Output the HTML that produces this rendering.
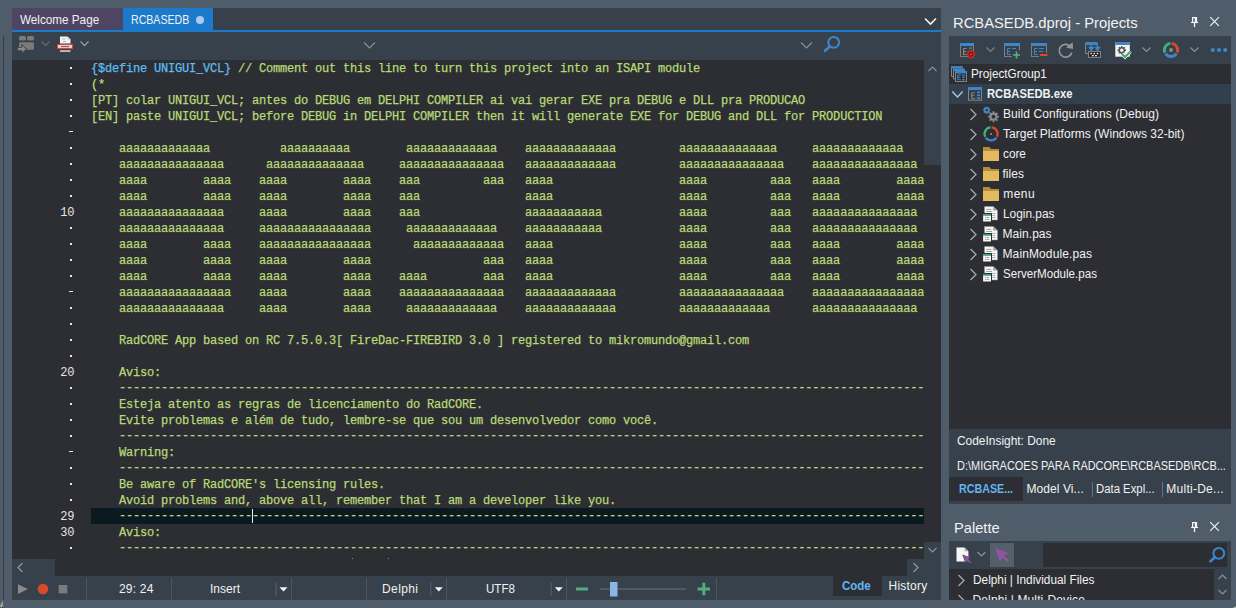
<!DOCTYPE html>
<html><head><meta charset="utf-8"><title>RCBASEDB</title>
<style>
*{box-sizing:border-box}
html,body{margin:0;padding:0}
body{width:1236px;height:608px;background:#4f5d6b;overflow:hidden;position:relative;font-family:"Liberation Sans",sans-serif;}
.a{position:absolute}
.l{position:absolute;white-space:pre;line-height:normal}
#ed{position:absolute;left:12px;top:60px;width:912px;height:499px;background:#2d2e33;overflow:hidden}
#code{position:absolute;left:79px;top:0;width:833px;height:499px;overflow:hidden;font-family:"Liberation Mono",monospace;font-size:12px;letter-spacing:-0.2px;color:#b9d977;white-space:pre;-webkit-text-stroke:0.25px currentColor}
.ln{height:16px;line-height:18px}
.hl{background:#0b1920}
.d{color:#5cbdf4}
.dh{position:relative;top:-1px}
.gn{position:absolute;left:39.3px;width:35px;text-align:right;height:16px;line-height:18px;font-family:"Liberation Mono",monospace;font-size:12px;letter-spacing:-0.2px;color:#e4e4e4}
.gd{position:absolute;background:#e8e8e8}
</style></head><body>
<!-- left dark line -->
<div class="a" style="left:3px;top:36px;width:1px;height:564px;background:#343d47"></div>
<!-- tab bar -->
<div class="a" style="left:12px;top:8px;width:929px;height:22px;background:#37414b"></div>
<div class="a" style="left:12px;top:8px;width:111px;height:22px;background:#4e4463"></div>
<div class="a" style="left:123px;top:8px;width:90px;height:24px;background:#1b7acb"></div>
<div class="a" style="left:12px;top:30px;width:929px;height:2px;background:#1b7acb"></div>
<div class="a" style="left:196px;top:16px;width:8px;height:8px;border-radius:50%;background:#a9c9ef"></div>
<!-- editor toolbar -->
<div class="a" style="left:12px;top:32px;width:929px;height:28px;background:#37414b"></div>
<!-- editor -->
<div class="a" style="left:12px;top:60px;width:929px;height:516px;background:#2d2e33"></div>
<div id="ed"><div id="code"><div class="ln"><span class="d">{$define UNIGUI_VCL}</span> // Comment out this line to turn this project into an ISAPI module</div><div class="ln">(*</div><div class="ln">[PT] colar UNIGUI_VCL; antes do DEBUG em DELPHI COMPILER ai vai gerar EXE pra DEBUG e DLL pra PRODUCAO</div><div class="ln">[EN] paste UNIGUI_VCL; before DEBUG in DELPHI COMPILER then it will generate EXE for DEBUG and DLL for PRODUCTION</div><div class="ln"> </div><div class="ln">    aaaaaaaaaaaaa          aaaaaaaaaa        aaaaaaaaaaaaa    aaaaaaaaaaaaa         aaaaaaaaaaaaaa     aaaaaaaaaaaaa</div><div class="ln">    aaaaaaaaaaaaaaa      aaaaaaaaaaaaaa     aaaaaaaaaaaaaaa   aaaaaaaaaaaaa         aaaaaaaaaaaaaaa    aaaaaaaaaaaaaaa</div><div class="ln">    aaaa        aaaa    aaaa        aaaa    aaa         aaa   aaaa                  aaaa         aaa   aaaa        aaaa</div><div class="ln">    aaaa        aaaa    aaaa        aaaa    aaa               aaaa                  aaaa         aaa   aaaa        aaaa</div><div class="ln">    aaaaaaaaaaaaaaa     aaaa        aaaa    aaa               aaaaaaaaaaa           aaaa         aaa   aaaaaaaaaaaaaaa</div><div class="ln">    aaaaaaaaaaaaaaa     aaaaaaaaaaaaaaaa     aaaaaaaaaaaaa    aaaaaaaaaaa           aaaa         aaa   aaaaaaaaaaaaaaa</div><div class="ln">    aaaa        aaaa    aaaaaaaaaaaaaaaa      aaaaaaaaaaaaa   aaaa                  aaaa         aaa   aaaa        aaaa</div><div class="ln">    aaaa        aaaa    aaaa        aaaa                aaa   aaaa                  aaaa         aaa   aaaa        aaaa</div><div class="ln">    aaaa        aaaa    aaaa        aaaa    aaaa        aaa   aaaa                  aaaa         aaa   aaaa        aaaa</div><div class="ln">    aaaaaaaaaaaaaaaa    aaaa        aaaa    aaaaaaaaaaaaaaa   aaaaaaaaaaaaa         aaaaaaaaaaaaaaa    aaaaaaaaaaaaaaaa</div><div class="ln">    aaaaaaaaaaaaaaa     aaaa        aaaa     aaaaaaaaaaaaa    aaaaaaaaaaaaa         aaaaaaaaaaaaa      aaaaaaaaaaaaaaa</div><div class="ln"> </div><div class="ln">    RadCORE App based on RC 7.5.0.3[ FireDac-FIREBIRD 3.0 ] registered to mikromundo@gmail.com</div><div class="ln"> </div><div class="ln">    Aviso:</div><div class="ln">    <span class="dh">------------------------------------------------------------------------------------------------------------------------</span></div><div class="ln">    Esteja atento as regras de licenciamento do RadCORE.</div><div class="ln">    Evite problemas e além de tudo, lembre-se que sou um desenvolvedor como você.</div><div class="ln">    <span class="dh">------------------------------------------------------------------------------------------------------------------------</span></div><div class="ln">    Warning:</div><div class="ln">    <span class="dh">------------------------------------------------------------------------------------------------------------------------</span></div><div class="ln">    Be aware of RadCORE's licensing rules.</div><div class="ln">    Avoid problems and, above all, remember that I am a developer like you.</div><div class="ln hl">    <span class="dh">------------------------------------------------------------------------------------------------------------------------</span></div><div class="ln">    Aviso:</div><div class="ln">    <span class="dh">------------------------------------------------------------------------------------------------------------------------</span></div><div class="ln">    Esteja atento as regras de licenciamento do RadCORE.</div></div></div>
<div class="gd" style="top:67px;left:69.5px;width:2px;height:2px"></div><div class="gd" style="top:83px;left:69.5px;width:2px;height:2px"></div><div class="gd" style="top:99px;left:69.5px;width:2px;height:2px"></div><div class="gd" style="top:115px;left:69.5px;width:2px;height:2px"></div><div class="gd" style="top:131px;left:68.5px;width:4px;height:1px"></div><div class="gd" style="top:147px;left:69.5px;width:2px;height:2px"></div><div class="gd" style="top:163px;left:69.5px;width:2px;height:2px"></div><div class="gd" style="top:179px;left:69.5px;width:2px;height:2px"></div><div class="gd" style="top:195px;left:69.5px;width:2px;height:2px"></div><div class="gn" style="top:204px">10</div><div class="gd" style="top:227px;left:69.5px;width:2px;height:2px"></div><div class="gd" style="top:243px;left:69.5px;width:2px;height:2px"></div><div class="gd" style="top:259px;left:69.5px;width:2px;height:2px"></div><div class="gd" style="top:275px;left:69.5px;width:2px;height:2px"></div><div class="gd" style="top:291px;left:68.5px;width:4px;height:1px"></div><div class="gd" style="top:307px;left:69.5px;width:2px;height:2px"></div><div class="gd" style="top:323px;left:69.5px;width:2px;height:2px"></div><div class="gd" style="top:339px;left:69.5px;width:2px;height:2px"></div><div class="gd" style="top:355px;left:69.5px;width:2px;height:2px"></div><div class="gn" style="top:364px">20</div><div class="gd" style="top:387px;left:69.5px;width:2px;height:2px"></div><div class="gd" style="top:403px;left:69.5px;width:2px;height:2px"></div><div class="gd" style="top:419px;left:69.5px;width:2px;height:2px"></div><div class="gd" style="top:435px;left:69.5px;width:2px;height:2px"></div><div class="gd" style="top:451px;left:68.5px;width:4px;height:1px"></div><div class="gd" style="top:467px;left:69.5px;width:2px;height:2px"></div><div class="gd" style="top:483px;left:69.5px;width:2px;height:2px"></div><div class="gd" style="top:499px;left:69.5px;width:2px;height:2px"></div><div class="gn" style="top:508px">29</div><div class="gn" style="top:524px">30</div><div class="gd" style="top:547px;left:69.5px;width:2px;height:2px"></div>
<div class="a" style="left:252px;top:509px;width:1px;height:14px;background:#f0f0f0"></div>
<div class="a" style="left:352px;top:558px;width:1px;height:1px;background:#7f9460"></div><div class="a" style="left:388px;top:558px;width:1px;height:1px;background:#7f9460"></div>
<!-- scrollbars -->
<div class="a" style="left:924px;top:60px;width:17px;height:105px;background:#37414b"></div>
<div class="a" style="left:924px;top:542px;width:17px;height:34px;background:#37414b"></div>
<div class="a" style="left:907px;top:559px;width:17px;height:17px;background:#37414b"></div>
<div class="a" style="left:12px;top:559px;width:43px;height:17px;background:#37414b"></div>
<!-- status bar -->
<div class="a" style="left:12px;top:576px;width:929px;height:24px;background:#37414b"></div>
<div class="a" style="left:833px;top:576px;width:49px;height:20px;background:#2d2e33"></div>
<!-- right: projects -->
<div class="a" style="left:949px;top:36px;width:282px;height:468px;background:#37414b"></div>
<div class="a" style="left:949px;top:64px;width:282px;height:365px;background:#2d2e33"></div>
<div class="a" style="left:949px;top:84px;width:282px;height:20px;background:#323f4c"></div>
<div class="a" style="left:949px;top:477px;width:74px;height:24px;background:#2d2e33"></div>
<div class="a" style="left:1092px;top:482px;width:1px;height:15px;background:#6a737c"></div>
<div class="a" style="left:1162px;top:482px;width:1px;height:15px;background:#6a737c"></div>
<!-- palette -->
<div class="a" style="left:949px;top:541px;width:282px;height:59px;background:#37414b"></div>
<div class="a" style="left:1043px;top:543px;width:184px;height:24px;background:#2d2e33"></div>
<div class="a" style="left:990px;top:543px;width:24px;height:23.700px;background:#545f69"></div>
<div class="a" style="left:949px;top:569px;width:265px;height:31px;background:#2d2e33;overflow:hidden"></div>
<svg class="a" style="left:0;top:0" width="1236" height="608" viewBox="0 0 1236 608" fill="none">
<!-- ===== editor tab bar / toolbar ===== -->
<path d="M925 18.5 L930.5 24 L936 18.5" stroke="#f4f4f4" stroke-width="1.6"/>
<!-- icon1: layout -->
<g fill="#7b7b7b">
<rect x="19" y="36" width="7" height="4.5" rx="1.5"/>
<rect x="27" y="36" width="7" height="4.5" rx="1.5"/>
<rect x="19" y="42.200" width="15" height="7.600" rx="1.500"/>
<path d="M17.800 47.800 H22.300 V45.600 L26 49 L22.300 52.400 V50.200 H17.800 Z" fill="#8a8a8a" stroke="#37414b" stroke-width="1.600" paint-order="stroke"/>
</g>
<path d="M41.500 41.500 L45.500 45.500 L49.500 41.500" stroke="#5f6b76" stroke-width="1.300"/>
<!-- icon2: doc with red -->
<path d="M60 36.500 H67.500 L70.500 39.500 V43.500 H60 Z" fill="#f4f4f4"/>
<path d="M67.500 36.500 V39.500 H70.500 Z" fill="#c9c9c9"/>
<rect x="62" y="38.500" width="3.500" height="1" fill="#b5b5b5"/><rect x="63" y="41" width="3" height="1" fill="#b5b5b5"/>
<rect x="57.500" y="44.500" width="15" height="4.100" fill="#f3c9cc" stroke="#d8472a" stroke-width="1"/>
<rect x="61" y="46.100" width="8" height="1" fill="#6b5a60"/>
<rect x="60" y="50.400" width="10.500" height="1.300" fill="#f4f4f4"/>
<path d="M80.500 41.500 L84.500 45.500 L88.500 41.500" stroke="#939da6" stroke-width="1.300"/>
<path d="M364 42.500 L369.500 48 L375 42.500" stroke="#87919a" stroke-width="1.200"/>
<path d="M801 42.500 L806.500 48 L812 42.500" stroke="#87919a" stroke-width="1.200"/>
<circle cx="833.700" cy="42.300" r="5.400" stroke="#3f86c8" stroke-width="2"/>
<path d="M829.800 46.600 L825 50.800" stroke="#3f86c8" stroke-width="2.600" stroke-linecap="round"/>
<!-- scroll arrows -->
<path d="M928.500 71 L932.500 67 L936.500 71" stroke="#87919a" stroke-width="1.200"/>
<path d="M928.500 548 L932.500 552 L936.500 548" stroke="#87919a" stroke-width="1.200"/>
<path d="M913.500 563 L918 567.500 L913.500 572" stroke="#8f98a0" stroke-width="1.200"/>
<path d="M22.500 563 L18 567.500 L22.500 572" stroke="#8f98a0" stroke-width="1.200"/>
<!-- ===== status bar ===== -->
<path d="M18 584.200 L27.800 589 L18 593.900 Z" fill="#8a8a8a"/>
<circle cx="43" cy="589" r="5.300" fill="#d9492b"/>
<rect x="58.600" y="585" width="8.700" height="8.400" fill="#7b7b7b"/>
<g fill="#4b5661">
<rect x="86" y="578" width="1" height="22"/><rect x="171" y="578" width="1" height="22"/>
<rect x="291" y="578" width="1" height="22"/><rect x="366" y="578" width="1" height="22"/>
<rect x="446" y="578" width="1" height="22"/><rect x="566" y="578" width="1" height="22"/>
<rect x="716" y="578" width="1" height="22"/>
<rect x="275.500" y="582" width="1.500" height="14"/><rect x="430" y="582" width="1.500" height="14"/><rect x="550.500" y="582" width="1.500" height="14"/>
</g>
<g fill="#f4f4f4">
<path d="M279.500 587.200 H287.500 L283.500 591.500 Z"/>
<path d="M434.800 587.200 H442.800 L438.800 591.500 Z"/>
<path d="M554.800 587.200 H562.800 L558.800 591.500 Z"/>
</g>
<rect x="576" y="587.500" width="12" height="3" fill="#4fae7c"/>
<rect x="600" y="588.500" width="86" height="1" fill="#6b747d"/>
<rect x="610" y="582" width="7.500" height="14.500" fill="#8db4e2"/>
<rect x="697.500" y="587.500" width="12.500" height="3" fill="#4fae7c"/><rect x="702.300" y="582.700" width="3" height="12.500" fill="#4fae7c"/>
<!-- ===== right panel header ===== -->
<g id="pin1" fill="#f4f4f4">
<path fill-rule="evenodd" d="M1192 17 H1197.100 V22 H1192 Z M1193.200 18.200 V22 H1194.800 V18.200 Z"/>
<rect x="1191" y="21.900" width="7.100" height="1.150"/><rect x="1193.900" y="23" width="1.250" height="4.100"/>
</g>
<path d="M1210.200 17.200 L1218.900 25.900 M1218.900 17.200 L1210.200 25.900" stroke="#f4f4f4" stroke-width="1.150"/>
<use href="#pin1" y="505"/>
<path d="M1210.200 522.200 L1218.900 530.900 M1218.900 522.200 L1210.200 530.900" stroke="#f4f4f4" stroke-width="1.150"/>
<!-- ===== projects toolbar ===== -->
<!-- icon 1 -->
<rect x="960.500" y="43.500" width="13" height="13" stroke="#7d7d7d"/><rect x="960" y="43" width="14" height="3" fill="#3f86c8"/>
<path d="M966.500 48.500 H963.500 V54.500 H966.500 M963.500 51.500 H966" stroke="#8a8a8a"/>
<rect x="969" y="47.500" width="3" height="1.300" fill="#3f86c8"/>
<circle cx="971" cy="54.200" r="3.300" fill="#2a2022" stroke="#d3251c" stroke-width="1.700"/><circle cx="971" cy="54.200" r="1.600" fill="#e0241b"/>
<path d="M986.500 47.500 L990.500 51.500 L994.500 47.500" stroke="#77828b" stroke-width="1.200"/>
<!-- icon 2 -->
<rect x="1004.500" y="43.500" width="15" height="13" stroke="#7d7d7d"/><rect x="1004" y="43" width="16" height="3" fill="#3f86c8"/>
<path d="M1010.500 48.500 H1007.500 V54.500 H1010.500 M1007.500 51.500 H1010" stroke="#3f86c8"/>
<rect x="1012" y="48" width="4" height="1" fill="#3f86c8"/><rect x="1012" y="51" width="3" height="1" fill="#3f86c8"/>
<rect x="1012" y="50.500" width="9" height="9" fill="#37414b"/>
<path d="M1016.500 51.500 V58.500 M1013 55 H1020" stroke="#4fb783" stroke-width="1.600"/>
<!-- icon 3 -->
<rect x="1031.500" y="43.500" width="15" height="13" stroke="#7d7d7d"/><rect x="1031" y="43" width="16" height="3" fill="#3f86c8"/>
<path d="M1037.500 48.500 H1034.500 V54.500 H1037.500 M1034.500 51.500 H1037" stroke="#3f86c8"/>
<rect x="1039" y="48" width="5" height="1" fill="#3f86c8"/><rect x="1039" y="51" width="4" height="1" fill="#3f86c8"/>
<rect x="1039" y="53" width="9" height="4.500" fill="#37414b"/>
<rect x="1040" y="54" width="7.500" height="2" fill="#d64a2f"/>
<!-- icon 4 refresh -->
<path d="M1070.100 46.100 A6.400 6.400 0 1 0 1071.800 52.400" stroke="#959595" stroke-width="1.700"/>
<path d="M1066 47.700 L1073.100 48.900 L1072.600 42.300 Z" fill="#959595"/>
<!-- icon 5 -->
<path d="M1085.500 44 V53.500 H1088" stroke="#858585"/><path d="M1085 45 V43.500 A1.500 1.500 0 0 1 1086.500 42 H1096.500 A1.500 1.500 0 0 1 1098 43.500 V45 Z" fill="#3f86c8"/>
<path d="M1091.300 45 V49 M1089.300 47.300 L1091.300 50.300 L1093.300 47.300 Z" stroke="#3f86c8" stroke-width="1.300" fill="#3f86c8"/>
<path d="M1097.500 45 V49 M1095.500 47.300 L1097.500 50.300 L1099.500 47.300 Z" stroke="#3f86c8" stroke-width="1.300" fill="#3f86c8"/>
<rect x="1088.500" y="51.600" width="12" height="5.800" fill="#24272b" stroke="#858585"/>
<g fill="#f4f4f4"><rect x="1090.500" y="52.900" width="1.400" height="1.300"/><rect x="1093.600" y="52.900" width="1.400" height="1.300"/><rect x="1096.800" y="52.900" width="1.400" height="1.300"/><rect x="1092" y="55" width="1.700" height="1.300"/><rect x="1095.100" y="55" width="1.700" height="1.300"/></g>
<!-- icon 6 -->
<rect x="1115.300" y="42" width="14.500" height="14.700" fill="#f4f4f4"/><rect x="1115.300" y="42" width="14.500" height="3" fill="#3f86c8"/>
<circle cx="1121.800" cy="50.300" r="2.600" stroke="#555" stroke-width="1.600"/>
<g stroke="#555" stroke-width="1.400"><path d="M1121.800 46 V47.500 M1121.800 53 V54.600 M1117.500 50.300 H1119 M1124.500 50.300 H1126 M1118.800 47.300 L1119.800 48.300 M1124.800 47.300 L1123.800 48.300 M1118.800 53.300 L1119.800 52.300"/></g>
<path d="M1122 54 L1125 57 L1130.500 51.500" stroke="#f4f4f4" stroke-width="3.400"/>
<path d="M1122 54 L1125 57 L1130.500 51.500" stroke="#3fa66f" stroke-width="2"/>
<path d="M1142.500 47.500 L1146.500 51.500 L1150.500 47.500" stroke="#87919a" stroke-width="1.200"/>
<!-- icon 7 ring -->
<g stroke-width="2.9">
<path d="M1165.02 52.69 A6.6 6.6 0 0 1 1170.42 43.33" stroke="#3fae7e"/>
<path d="M1171.58 43.33 A6.6 6.6 0 0 1 1176.98 52.69" stroke="#d9492b"/>
<path d="M1176.41 53.69 A6.6 6.6 0 0 1 1165.59 53.69" stroke="#3f86c8"/>
</g>
<circle cx="1171" cy="50" r="2" fill="#8a8a8a"/>
<path d="M1190.500 47.500 L1194.500 51.500 L1198.500 47.500" stroke="#87919a" stroke-width="1.200"/>
<circle cx="1212.800" cy="50" r="2.100" fill="#3f86c8"/><circle cx="1219" cy="50" r="2.100" fill="#3f86c8"/><circle cx="1225.200" cy="50" r="2.100" fill="#3f86c8"/>
<!-- ===== tree icons ===== -->
<!-- project group -->
<g>
<path d="M951.500 68 V76.500 H953" stroke="#8c8378"/><rect x="951" y="66.100" width="11.900" height="2.500" fill="#3f86c8"/>
<path d="M953.500 70 V79 H955" stroke="#8c8378"/><rect x="953" y="68.600" width="11.900" height="2.400" fill="#3f86c8"/>
<rect x="955.500" y="72" width="11" height="9.500" fill="#2d2e33" stroke="#8c8378"/><rect x="955" y="71" width="12" height="2.400" fill="#3f86c8"/>
<path d="M960.800 74.900 H957.800 V79.700 H960.800 M957.800 77.300 H960.300" stroke="#3f86c8"/>
<rect x="962.200" y="74.500" width="2.500" height="1.300" fill="#3f86c8"/><rect x="962.200" y="76.700" width="2.500" height="1.300" fill="#3f86c8"/><rect x="962.200" y="79" width="2.500" height="1.300" fill="#3f86c8"/>
</g>
<!-- project -->
<path d="M952.300 91.500 L957.500 97 L962.700 91.500" stroke="#b0c6de" stroke-width="1.400"/>
<rect x="968.500" y="88" width="13" height="12.200" stroke="#8c8378"/><rect x="968" y="87.200" width="14" height="2.800" fill="#3f86c8"/>
<path d="M974.900 92.900 H971.600 V98.500 H974.900 M971.600 95.700 H974.400" stroke="#8c8378"/>
<rect x="977" y="91.500" width="3.100" height="1.700" fill="#3f86c8"/><rect x="977" y="94.400" width="3.100" height="1.700" fill="#3f86c8"/><rect x="977" y="97.200" width="3.100" height="1.700" fill="#3f86c8"/>
<!-- chevrons -->
<g stroke="#a8a8a8" stroke-width="1.300">
<path d="M970.500 109 L976 114.500 L970.500 120"/><path d="M970.500 129 L976 134.500 L970.500 140"/>
<path d="M970.500 149 L976 154.500 L970.500 160"/><path d="M970.500 169 L976 174.500 L970.500 180"/>
<path d="M970.500 189 L976 194.500 L970.500 200"/><path d="M970.500 209 L976 214.500 L970.500 220"/>
<path d="M970.500 229 L976 234.500 L970.500 240"/><path d="M970.500 249 L976 254.500 L970.500 260"/>
<path d="M970.500 269 L976 274.500 L970.500 280"/>
<path d="M958.500 575 L964 580.500 L958.500 586"/><path d="M958.500 595 L964 600.500 L958.500 606"/>
</g>
<!-- gears -->
<g id="gear">
<circle cx="986.700" cy="110.200" r="2.100" stroke="#3f86c8" stroke-width="1.900"/>
<g stroke="#3f86c8" stroke-width="1.300"><path d="M986.700 106.400 V107.800 M986.700 112.600 V114 M982.900 110.200 H984.300 M989.100 110.200 H990.500 M984 107.500 L985 108.500 M989.400 107.500 L988.400 108.500 M984 112.900 L985 111.900 M989.400 112.900 L988.400 111.900"/></g>
<circle cx="993.500" cy="116.700" r="3" stroke="#8a8a8a" stroke-width="2.200"/>
<g stroke="#8a8a8a" stroke-width="1.800"><path d="M993.500 111.200 V113 M993.500 120.400 V122.200 M988 116.700 H989.800 M997.200 116.700 H999 M989.600 112.800 L990.900 114.100 M997.400 112.800 L996.100 114.100 M989.600 120.600 L990.900 119.300 M997.400 120.600 L996.100 119.300"/></g>
</g>
<!-- platform ring -->
<g stroke-width="2.3">
<path d="M985.21 136.65 A6.5 6.5 0 0 1 990.53 127.42" stroke="#3fae7e"/>
<path d="M991.67 127.42 A6.5 6.5 0 0 1 996.99 136.65" stroke="#d9492b"/>
<path d="M996.42 137.63 A6.5 6.5 0 0 1 985.78 137.63" stroke="#3f86c8"/>
</g>
<rect x="990.200" y="133.100" width="1.800" height="1.800" fill="#8a8a8a"/>
<!-- folders -->
<g id="fold1"><path d="M983 147 H989.500 L991 149 H999 V151 H983 Z" fill="#b58d3b"/><rect x="983" y="151" width="16" height="10" fill="#e3ba60"/></g>
<g><path d="M983 167 H989.500 L991 169 H999 V171 H983 Z" fill="#b58d3b"/><rect x="983" y="171" width="16" height="10" fill="#e3ba60"/></g>
<g><path d="M983 187 H989.500 L991 189 H999 V191 H983 Z" fill="#b58d3b"/><rect x="983" y="191" width="16" height="10" fill="#e3ba60"/></g>
<!-- file icons -->
<defs><g id="pas">
<path d="M1.500 -0.500 H10.400 L14.500 3.300 V13 H1.500 Z" fill="#f6f6f6" stroke="#8d8f93" stroke-width="0.500"/><path d="M10.400 -0.500 V3.300 H14.500 Z" fill="#2d2e33" opacity="0.350"/>
<path d="M10.600 0.300 V3.100 H13.600" stroke="#8d8f93" stroke-width="0.600" fill="none"/>
<rect x="3.200" y="1.900" width="5" height="0.900" fill="#9a9a9a"/><rect x="3.200" y="4" width="6" height="0.900" fill="#9a9a9a"/><rect x="9.200" y="6.100" width="3.500" height="0.900" fill="#a5a5a5"/><rect x="9.200" y="8.100" width="3" height="0.900" fill="#a5a5a5"/><rect x="9.200" y="10.100" width="3.500" height="0.900" fill="#a5a5a5"/>
<rect x="-0.500" y="6" width="9.500" height="9" fill="#2d2e33"/>
<rect x="0.100" y="7" width="7.900" height="7.500" fill="#f6f6f6"/><rect x="0.100" y="7" width="7.900" height="1.800" fill="#42a078"/>
<rect x="2" y="10.200" width="1.500" height="0.900" fill="#9a9a9a"/><rect x="4" y="10.200" width="2" height="0.900" fill="#9a9a9a"/><rect x="2" y="12.100" width="1.500" height="0.900" fill="#9a9a9a"/><rect x="4" y="12.100" width="2" height="0.900" fill="#9a9a9a"/>
</g></defs>
<use href="#pas" x="983" y="207"/><use href="#pas" x="983" y="227"/><use href="#pas" x="983" y="247"/><use href="#pas" x="983" y="267"/>
<!-- ===== palette ===== -->
<path d="M956.500 547.400 H964.500 L968.400 551.300 V561.400 H956.500 Z" fill="#f7f7f7"/><path d="M964.500 547.400 V551.300 H968.400 Z" fill="#aab0b6"/>
<path d="M963.300 555.500 L970.300 558 L968 559.300 L971.200 562.200 L970.200 563.300 L967 560.400 L965.800 562.700 Z" fill="#9054a4" stroke="#37414b" stroke-width="1.200" paint-order="stroke"/>
<path d="M977.500 552 L981.500 556 L985.500 552" stroke="#87919a" stroke-width="1.200"/>
<path d="M995 548.100 L1008.600 553.200 L1004.200 555.600 L1008.800 560.200 L1007 562 L1002.400 557.400 L999.800 561.600 Z" fill="#9054a4"/>
<circle cx="1218.800" cy="553.300" r="5.400" stroke="#3f86c8" stroke-width="2"/>
<path d="M1214.900 557.300 L1210.500 561.300" stroke="#3f86c8" stroke-width="2.600" stroke-linecap="round"/>
<path d="M1218.500 579 L1222.500 575 L1226.500 579" stroke="#87919a" stroke-width="1.200"/>
<path d="M1218.500 590 L1222.500 594 L1226.500 590" stroke="#87919a" stroke-width="1.200"/>
</svg>

<div class="a" style="left:0;top:0;width:1236px;height:608px;overflow:hidden">
<span class="l" style="left:20.20px;top:12.9px;font-size:12px;font-weight:400;color:#f2f2f2;transform-origin:0 0;transform:scaleX(0.9753)">Welcome Page</span>
<span class="l" style="left:130.62px;top:12.9px;font-size:12px;font-weight:400;color:#f2f2f2;transform-origin:0 0;transform:scaleX(0.8828)">RCBASEDB</span>
<span class="l" style="left:953.22px;top:14.2px;font-size:15px;font-weight:400;color:#f2f2f2;transform-origin:0 0;transform:scaleX(0.9839)">RCBASEDB.dproj - Projects</span>
<span class="l" style="left:970.92px;top:66.9px;font-size:12px;font-weight:400;color:#f2f2f2;transform-origin:0 0;transform:scaleX(0.9803)">ProjectGroup1</span>
<span class="l" style="left:986.86px;top:86.9px;font-size:12px;font-weight:700;color:#f2f2f2;transform-origin:0 0;transform:scaleX(0.9356)">RCBASEDB.exe</span>
<span class="l" style="left:1003.00px;top:106.9px;font-size:12px;font-weight:400;color:#f2f2f2;letter-spacing:0.070px">Build Configurations (Debug)</span>
<span class="l" style="left:1003.00px;top:126.9px;font-size:12px;font-weight:400;color:#f2f2f2;letter-spacing:0.022px">Target Platforms (Windows 32-bit)</span>
<span class="l" style="left:1003.22px;top:146.9px;font-size:12px;font-weight:400;color:#f2f2f2;transform-origin:0 0;transform:scaleX(0.9818)">core</span>
<span class="l" style="left:1002.40px;top:166.9px;font-size:12px;font-weight:400;color:#f2f2f2;letter-spacing:0.050px">files</span>
<span class="l" style="left:1003.20px;top:186.9px;font-size:12px;font-weight:400;color:#f2f2f2;letter-spacing:0.467px">menu</span>
<span class="l" style="left:1002.51px;top:206.9px;font-size:12px;font-weight:400;color:#f2f2f2;transform-origin:0 0;transform:scaleX(0.9902)">Login.pas</span>
<span class="l" style="left:1002.50px;top:226.9px;font-size:12px;font-weight:400;color:#f2f2f2;letter-spacing:0.057px">Main.pas</span>
<span class="l" style="left:1002.50px;top:246.9px;font-size:12px;font-weight:400;color:#f2f2f2;letter-spacing:0.115px">MainModule.pas</span>
<span class="l" style="left:1002.84px;top:266.9px;font-size:12px;font-weight:400;color:#f2f2f2;transform-origin:0 0;transform:scaleX(0.9646)">ServerModule.pas</span>
<span class="l" style="left:956.71px;top:433.9px;font-size:12px;font-weight:400;color:#f2f2f2;transform-origin:0 0;transform:scaleX(0.9929)">CodeInsight: Done</span>
<span class="l" style="left:957.29px;top:458.9px;font-size:12px;font-weight:400;color:#f2f2f2;transform-origin:0 0;transform:scaleX(0.9130)">D:\MIGRACOES PARA RADCORE\RCBASEDB\RCB...</span>
<span class="l" style="left:958.71px;top:481.9px;font-size:12px;font-weight:700;color:#62b5f2;transform-origin:0 0;transform:scaleX(0.8915)">RCBASE...</span>
<span class="l" style="left:1026.40px;top:481.9px;font-size:12px;font-weight:400;color:#f2f2f2;letter-spacing:0.090px">Model Vi...</span>
<span class="l" style="left:1096.36px;top:481.9px;font-size:12px;font-weight:400;color:#f2f2f2;transform-origin:0 0;transform:scaleX(0.9450)">Data Expl...</span>
<span class="l" style="left:1166.30px;top:481.9px;font-size:12px;font-weight:400;color:#f2f2f2;letter-spacing:0.260px">Multi-De...</span>
<span class="l" style="left:953.62px;top:519.2px;font-size:15px;font-weight:400;color:#f2f2f2;transform-origin:0 0;transform:scaleX(0.9778)">Palette</span>
<span class="l" style="left:972.51px;top:572.9px;font-size:12px;font-weight:400;color:#f2f2f2;transform-origin:0 0;transform:scaleX(0.9861)">Delphi | Individual Files</span>
<span class="l" style="left:972.50px;top:592.9px;font-size:12px;font-weight:400;color:#f2f2f2;letter-spacing:0.125px">Delphi | Multi-Device</span>
<span class="l" style="left:119.00px;top:582.4px;font-size:12px;font-weight:400;color:#f2f2f2;letter-spacing:0.200px">29: 24</span>
<span class="l" style="left:210.00px;top:582.4px;font-size:12px;font-weight:400;color:#f2f2f2;letter-spacing:0.000px">Insert</span>
<span class="l" style="left:382.00px;top:582.4px;font-size:12px;font-weight:400;color:#f2f2f2;letter-spacing:0.400px">Delphi</span>
<span class="l" style="left:486.04px;top:582.4px;font-size:12px;font-weight:400;color:#f2f2f2;transform-origin:0 0;transform:scaleX(0.9643)">UTF8</span>
<span class="l" style="left:842.24px;top:578.9px;font-size:12px;font-weight:700;color:#62b5f2;transform-origin:0 0;transform:scaleX(0.9586)">Code</span>
<span class="l" style="left:888.60px;top:578.9px;font-size:12px;font-weight:400;color:#f2f2f2;letter-spacing:0.200px">History</span>

</div>
<div class="a" style="left:0;top:600px;width:1236px;height:8px;background:#4f5d6b"></div>
<svg class="a" style="left:0;top:0" width="1236" height="608" viewBox="0 0 1236 608"><path d="M0 605.5 L2.900 600.500 L3.100 607 H0 Z" fill="#c4cbab" opacity="0.600"/><rect x="0" y="607" width="1" height="1" fill="#ff0000"/><rect x="1" y="607" width="1" height="1" fill="#00e000"/><rect x="2" y="607" width="1" height="1" fill="#0000ff"/><path d="M1236 608 V606.200 L1232.500 608 Z" fill="#c4cbab" opacity="0.800"/></svg>
</body></html>
